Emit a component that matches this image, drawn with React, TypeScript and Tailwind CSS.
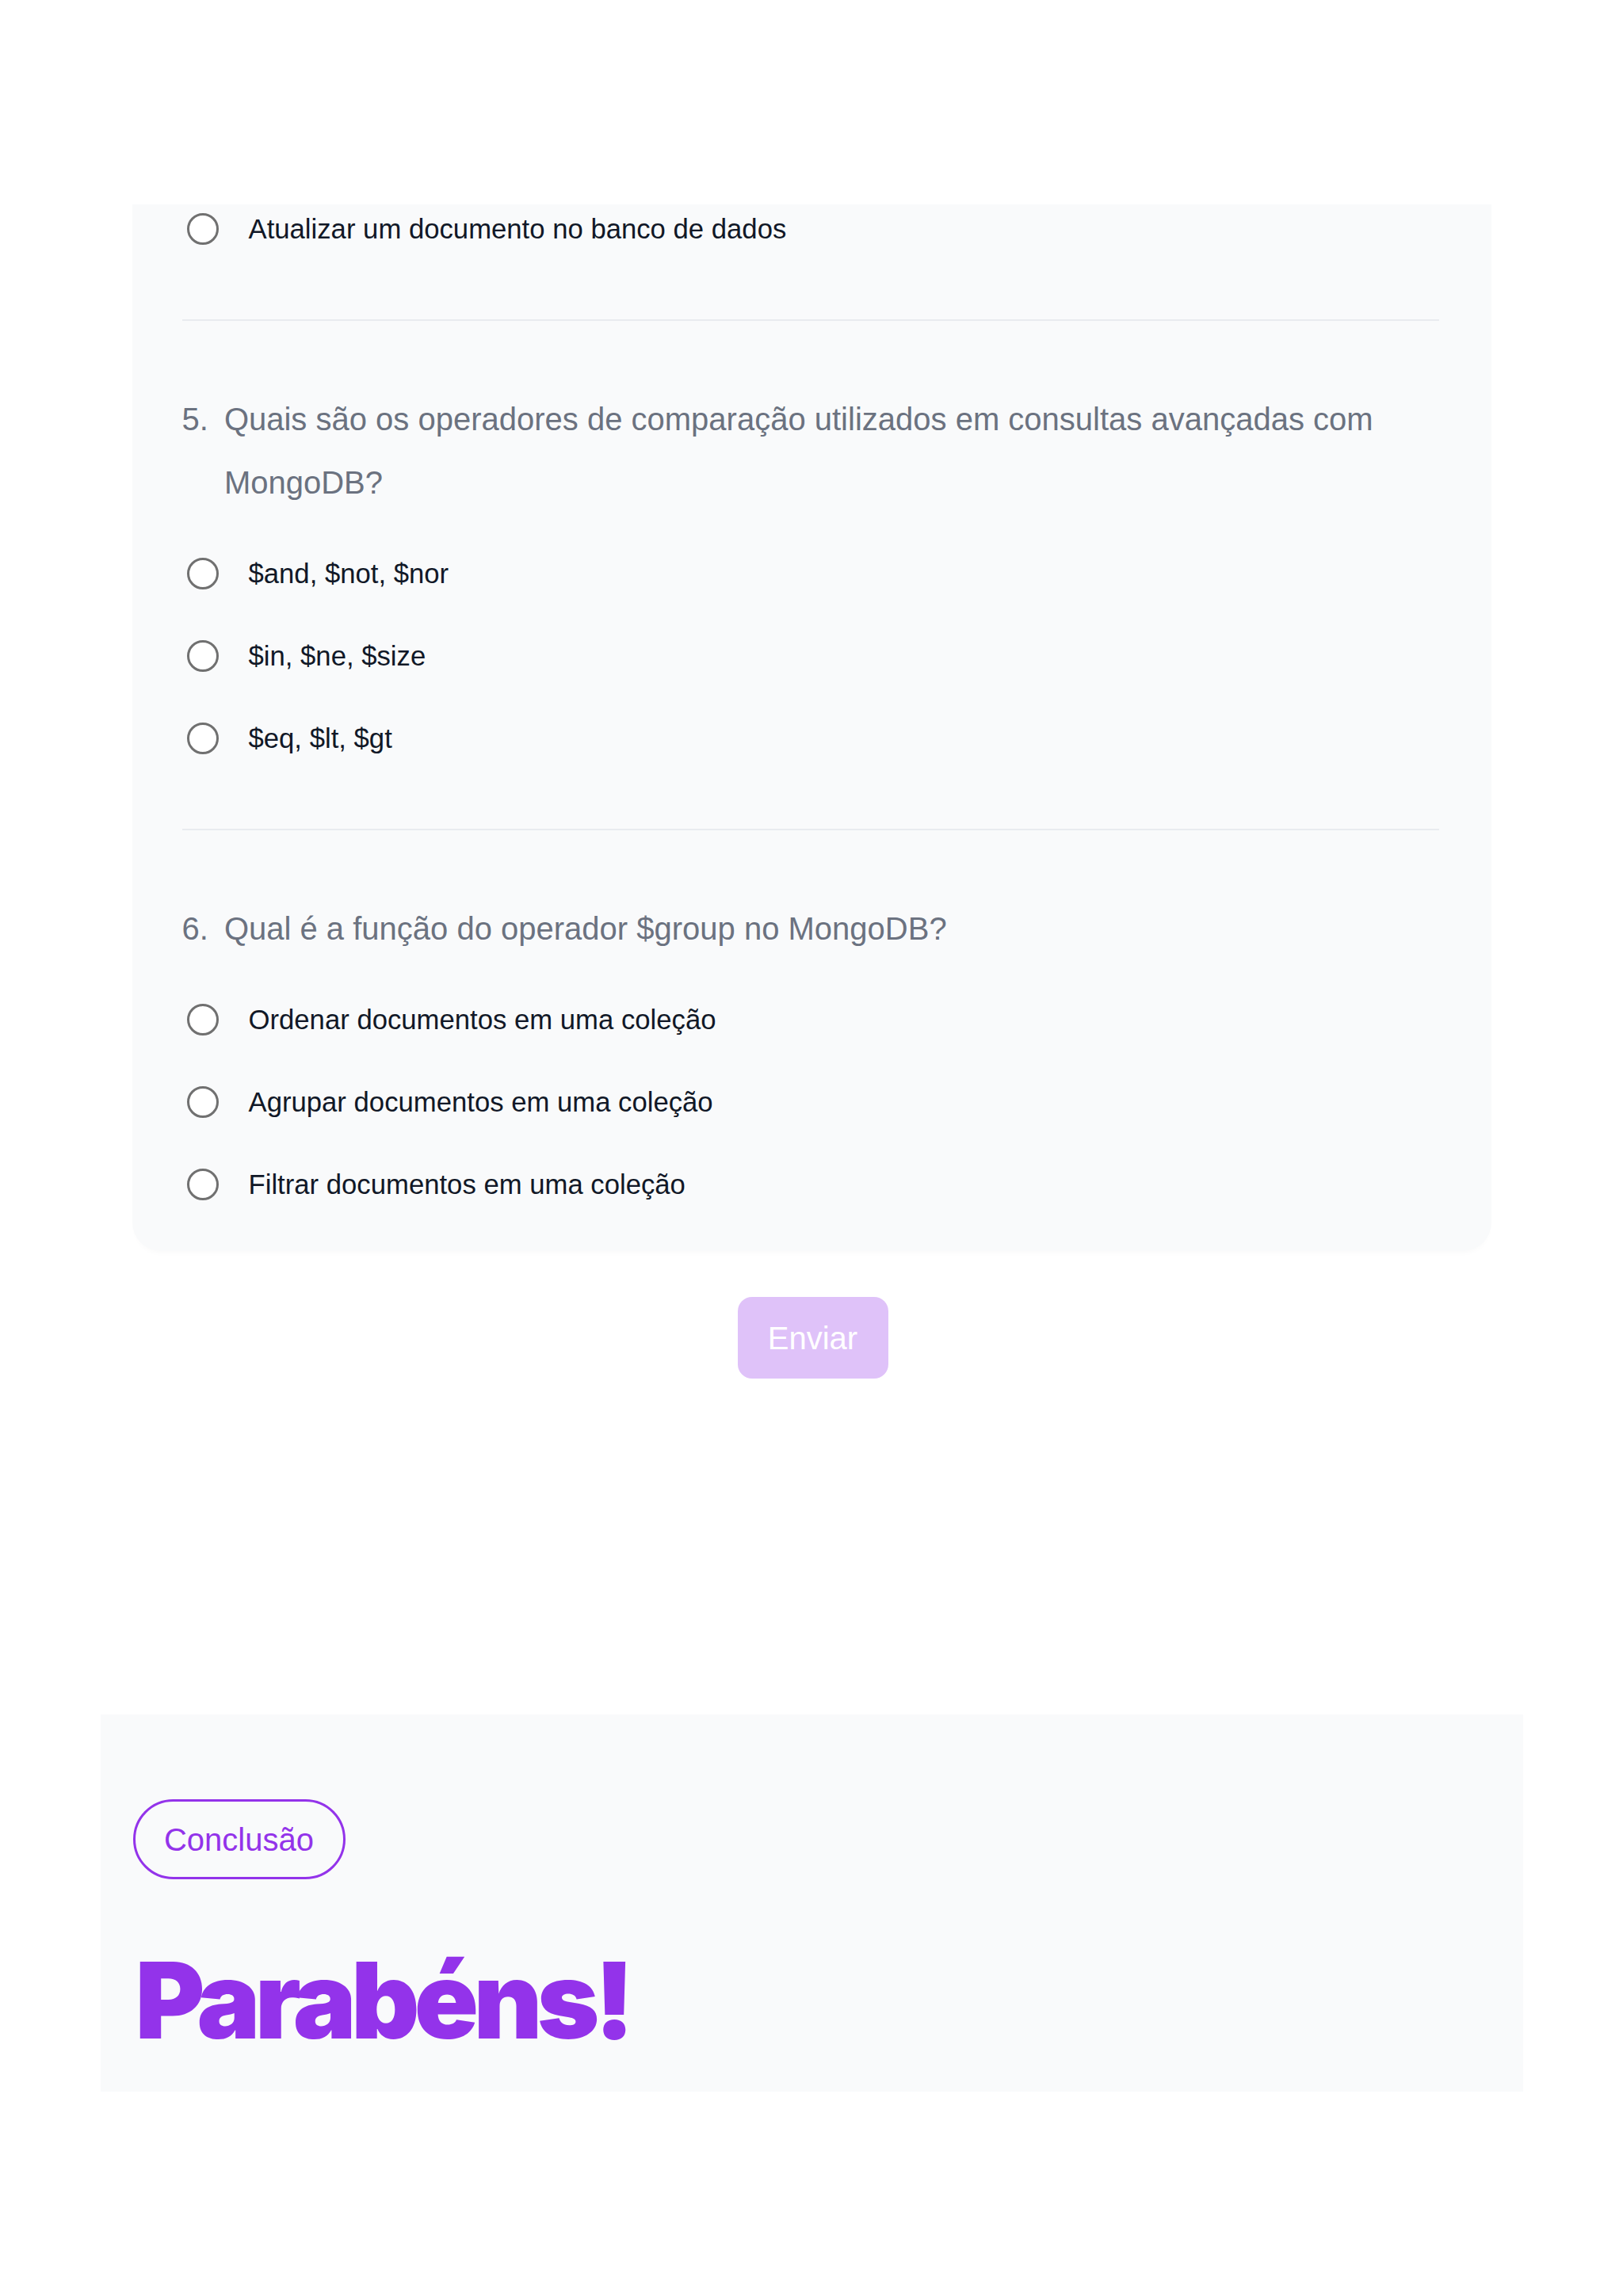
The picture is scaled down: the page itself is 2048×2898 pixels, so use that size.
import React from 'react';

interface Question {
  number: number;
  text: string;
  options: string[];
}

const questions: Question[] = [
  {
    number: 5,
    text: 'Quais são os operadores de comparação utilizados em consultas avançadas com MongoDB?',
    options: ['$and, $not, $nor', '$in, $ne, $size', '$eq, $lt, $gt'],
  },
  {
    number: 6,
    text: 'Qual é a função do operador $group no MongoDB?',
    options: [
      'Ordenar documentos em uma coleção',
      'Agrupar documentos em uma coleção',
      'Filtrar documentos em uma coleção',
    ],
  },
];

function RadioOption({ label }: { label: string }) {
  return (
    <label className="flex h-[52px] cursor-pointer items-center pl-[6px]">
      <span className="block h-[40px] w-[40px] shrink-0 rounded-full border-[3px] border-[#707070] bg-white" />
      <span className="ml-[38px] text-[34.7px] leading-[52px] text-[#111827]">{label}</span>
    </label>
  );
}

function QuestionBlock({ question }: { question: Question }) {
  return (
    <div>
      <div className="flex gap-[20px] text-[40px] leading-[80px] text-[#6b7280]">
        <span className="shrink-0">{question.number}.</span>
        <span>{question.text}</span>
      </div>
      <div className="mt-[49px] flex flex-col gap-[52px]">
        {question.options.map((option) => (
          <RadioOption key={option} label={option} />
        ))}
      </div>
    </div>
  );
}

function Divider() {
  return <div className="mb-[84px] mt-[88px] h-[2px] bg-[#e9ebef]" />;
}

export default function App() {
  return (
    <div className="min-h-[2898px] bg-white font-['Liberation_Sans',Arial,sans-serif]">
      <div className="h-[258px]" />

      {/* quiz card (scrolled: only the tail end is visible) */}
      <div className="mx-auto w-[1715px] rounded-b-[36px] bg-[#f9fafb] pb-[58px] pl-[63px] pr-[66px] pt-[5px] shadow-[0_6px_10px_-6px_rgba(0,0,0,0.04)]">
        <RadioOption label="Atualizar um documento no banco de dados" />
        {questions.map((question) => (
          <React.Fragment key={question.number}>
            <Divider />
            <QuestionBlock question={question} />
          </React.Fragment>
        ))}
      </div>

      <div className="mt-[58px] flex justify-center pl-[3px]">
        <button
          type="button"
          disabled
          className="flex h-[103px] w-[190px] items-center justify-center rounded-[18px] bg-[#dfc2f9] text-[40px] text-white"
        >
          Enviar
        </button>
      </div>

      {/* conclusion section */}
      <section className="mx-auto mt-[424px] w-[1795px] bg-[#f9fafb] pb-[49px] pl-[41px] pt-[107px]">
        <div className="flex h-[101px] w-[268px] items-center justify-center rounded-full border-[3px] border-[#9333ea] text-[40px] text-[#9333ea]">
          Conclusão
        </div>
        <h1 className="mt-[85px] pl-[3px] font-['Inter',sans-serif] text-[134px] font-black leading-[134px] tracking-[-0.05em] text-[#9333ea]">
          Parabéns!
        </h1>
      </section>
    </div>
  );
}
